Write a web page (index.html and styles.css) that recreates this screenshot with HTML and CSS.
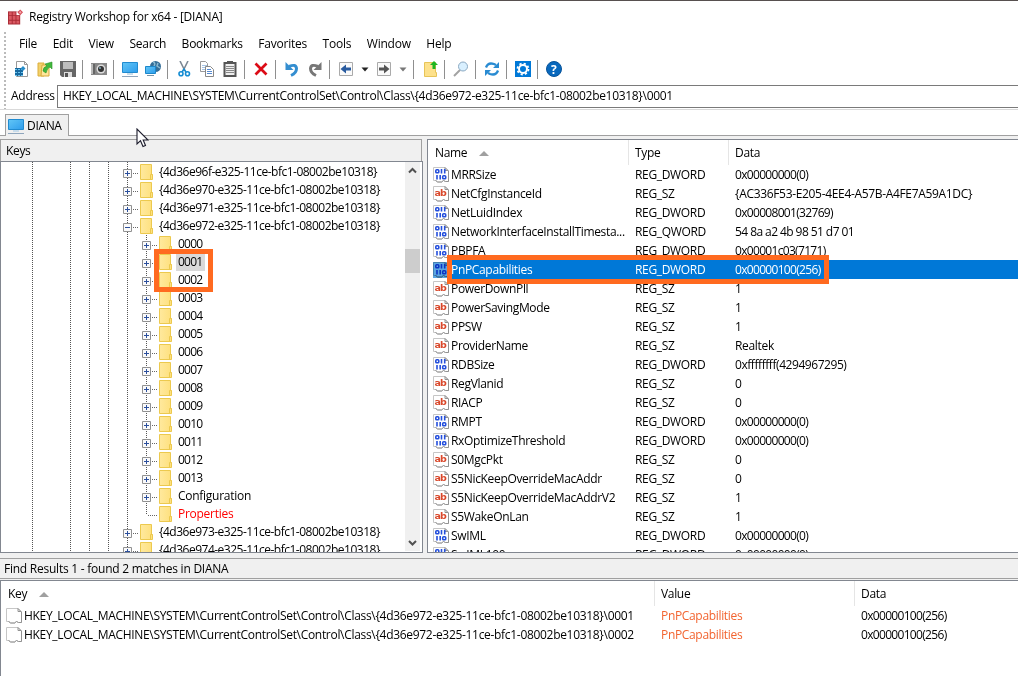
FILE: index.html
```html
<!DOCTYPE html>
<html lang="en">
<head>
<meta charset="utf-8">
<title>Registry Workshop for x64 - [DIANA]</title>
<link rel="stylesheet" href="styles.css">
</head>
<body>
<svg class="defs" aria-hidden="true">
  <defs>
    <linearGradient id="gold" x2="1"><stop stop-color="#ffe99e"/><stop offset="1" stop-color="#fee07d"/></linearGradient>
    <linearGradient id="sky" x2="1" y2="1"><stop stop-color="#62c6f6"/><stop offset="1" stop-color="#2d9cec"/></linearGradient>
    <symbol id="folder" viewBox="0 0 13 16"><path d="M.5.5h11v10h1v5H.5z" fill="url(#gold)" stroke="#ecc94e"/><path d="M10.500 15.500v-5h2" fill="none" stroke="#ecc94e"/></symbol>
    <symbol id="page" viewBox="0 0 16 16"><path d="M.5.500H12L15.500 4V14.500H12.500L10.500 13.500L9 15H4.500L3.500 13.500H.5z" fill="#fff" stroke="#c6c6c6"/><path d="M12 .500L15.500 4V14.500H12.500L10.500 13.500L9 14.500M12 .500V3.500H15M2.500 13.500L4.500 15H9" fill="none" stroke="#929292"/></symbol>
    <symbol id="bin" viewBox="0 0 16 16"><use href="#page" width="16" height="16"/><g fill="none" stroke="#244fdc" stroke-width="1.600"><rect x="2.800" y="2.800" width="3" height="3" rx=".9"/><path d="M8.500 2V6.600M11.700 2V6.600M4 8V12.600M7.200 8V12.600"/><rect x="9.700" y="8.800" width="3" height="3" rx=".9"/></g></symbol>
    <symbol id="str" viewBox="0 0 16 16"><use href="#page" width="16" height="16"/><text x="1.500" y="9.600" class="ab">ab</text></symbol>
    <symbol id="monitor" viewBox="0 0 16 16"><path d="M.5 1.500h15v10H.5z" fill="url(#sky)" stroke="#218bd0"/><path d="M5 12h6v2H5z" fill="#c8dceb"/><path d="M0 15.500h16" stroke="#8fa6bd"/></symbol>
    <symbol id="plus" viewBox="0 0 9 9"><path d="M.5.5h8v8h-8z" fill="#fafafa" stroke="#919191"/><path d="M2 4.500h5M4.500 2v5" stroke="#2b4f9c"/></symbol>
    <symbol id="minus" viewBox="0 0 9 9"><path d="M.5.5h8v8h-8z" fill="#fafafa" stroke="#919191"/><path d="M2 4.500h5" stroke="#2b4f9c"/></symbol>
  </defs>
</svg>
<div class="window">
  <header class="titlebar">
    <svg class="logo" viewBox="0 0 16 16"><path d="M0 2h13v14H0z" fill="#a92b35"/><path d="M1 3h3v3H1zM5 3h3v3H5zM1 7h3v4H1zM5 7h3v4H5zM9 7h3v4H9zM1 12h3v3H1zM5 12h3v3H5zM9 12h3v3H9z" fill="#da5962"/><path d="M9 2h4v4H9z" fill="#fff"/><path d="M13 0L16 3L13 6L10 3z" fill="#d64c56"/><path d="M13 1.500L14.500 3L13 4.500L11.500 3z" fill="#f4a7ab"/></svg>
    <span class="caption">Registry Workshop for x64 - [DIANA]</span>
  </header>
  <div class="bars">
    <div class="grip"></div>
    <div class="bar-rows">
      <nav class="menu"><span>File</span><span>Edit</span><span>View</span><span>Search</span><span>Bookmarks</span><span>Favorites</span><span>Tools</span><span>Window</span><span>Help</span></nav>
      <div class="toolbar">
        <svg viewBox="0 0 16 16"><path d="M2.500.5h8l3 3v12h-11z" fill="#fff" stroke="#999"/><path d="M10.500.500v3h3" fill="none" stroke="#999"/><path d="M1 7h8v8H1z" fill="#17699f"/><path d="M1 8.500h8M1 11.500h8M1 14.500h8" stroke="#6ec5ef" stroke-dasharray="2 1"/><path d="M9 5l2.500 2.500L9 10 6.500 7.500z" fill="#268dca"/></svg>
        <svg viewBox="0 0 16 16"><path d="M1 2h6v13H1z" fill="#f2d16b" stroke="#dcae3c"/><path d="M5 4h7v11H4z" fill="#ffe69b" stroke="#d9aa3d"/><path d="M6 10q0-4 4-5l-2-2 7-2v7l-2-2q-3 1-4 6z" fill="#42b83e" stroke="#289027" stroke-width=".6"/></svg>
        <svg viewBox="0 0 16 16"><path d="M0 0h16v16H2l-2-2z" fill="#666"/><path d="M3 1h10v7H3z" fill="#bdbdbd"/><path d="M4 11h8v5H4z" fill="#ddd"/><path d="M5 12h3v4H5z" fill="#555"/></svg>
        <i class="sep"></i>
        <svg viewBox="0 0 16 16"><path d="M0 2h16v12H0z" fill="#888"/><path d="M0 3h4v10H0z" fill="#bbb"/><path d="M2 3h2v10H2z" fill="#666"/><circle cx="10" cy="8" r="4.500" fill="#ddd"/><circle cx="10" cy="8" r="3" fill="#333"/><circle cx="9" cy="7" r="1" fill="#81a8bb"/></svg>
        <i class="sep"></i>
        <svg viewBox="0 0 16 16"><use href="#monitor" width="16" height="16"/></svg>
        <svg viewBox="0 0 16 16"><circle cx="10.500" cy="5.500" r="5.500" fill="#356e98"/><path d="M8 1q3 1 1 4M13 2l-1 3 3 2" stroke="#8bbad2" stroke-width="1.500" fill="none"/><path d="M.5 5.500h10v7H.5z" fill="url(#sky)" stroke="#1b87cb"/><path d="M2 14.500h7" stroke="#7793a5"/></svg>
        <i class="sep"></i>
        <svg viewBox="0 0 16 16"><path d="M4 0l5 10M12 0L7 10" stroke="#7d8995" stroke-width="1.600"/><circle cx="5" cy="12.800" r="2" fill="none" stroke="#168dd3" stroke-width="1.600"/><circle cx="11.500" cy="12.800" r="2" fill="none" stroke="#168dd3" stroke-width="1.600"/><path d="M6 11l2-3 2 3" fill="none" stroke="#168dd3" stroke-width="1.500"/></svg>
        <svg viewBox="0 0 16 16"><path d="M1.500.5h5l2 2v8h-7z" fill="#fff" stroke="#999"/><path d="M3 4.500h5M3 6.500h4M3 8.500h3" stroke="#a5c4e5"/><path d="M6.500 5.500h5l3 3v7h-8z" fill="#fff" stroke="#888"/><path d="M8 8.500h4M8 10.500h5M8 12.500h5" stroke="#5689cf"/></svg>
        <svg viewBox="0 0 16 16"><path d="M2.500 2h11v13h-11z" fill="#eee" stroke="#555" stroke-width="2"/><path d="M5 0h6v3H5z" fill="#555"/><path d="M4 5.500h8M4 7.500h8M4 9.500h8M4 11.500h8" stroke="#888"/></svg>
        <i class="sep"></i>
        <svg viewBox="0 0 16 16"><path d="M2.500 2.500l11 11M13.500 2.500l-11 11" stroke="#dc0b16" stroke-width="2.700"/></svg>
        <i class="sep"></i>
        <svg viewBox="0 0 16 16"><path d="M5 5.500q7-3 7.500 2Q12.500 12 7 14.500" fill="none" stroke="#348ed0" stroke-width="3"/><path d="M1.500 1v8h8z" fill="#348ed0"/></svg>
        <svg viewBox="0 0 16 16"><path d="M11 5.500q-7-3-7.500 2Q3.500 12 9 14.500" fill="none" stroke="#777" stroke-width="3"/><path d="M14.500 1v8h-8z" fill="#777"/></svg>
        <i class="sep"></i>
        <svg viewBox="0 0 16 16"><path d="M1.500 1.500h13v13h-13z" fill="#fafafa" stroke="#aaa"/><path d="M2.500 8L8 3.500v3h5v3H8v3z" fill="#295b9f"/></svg>
        <svg class="drop" viewBox="0 0 8 16"><path d="M.5 6.500h7L4 10.500z" fill="#222"/></svg>
        <svg viewBox="0 0 16 16"><path d="M1.500 1.500h13v13h-13z" fill="#fafafa" stroke="#aaa"/><path d="M13.500 8L8 3.500v3H3v3h5v3z" fill="#555"/></svg>
        <svg class="drop" viewBox="0 0 8 16"><path d="M.5 6.500h7L4 10.500z" fill="#777"/></svg>
        <i class="sep"></i>
        <svg viewBox="0 0 16 16"><path d="M2.500 1.500h11v10h1v4h-12z" fill="#fde18b" stroke="#e7c458"/><path d="M12 0l4 4h-2.500v4h-3V4H8z" fill="#1eb622"/></svg>
        <i class="sep"></i>
        <svg viewBox="0 0 16 16"><path d="M1 15l6-6" stroke="#a2a2a2" stroke-width="2"/><circle cx="10" cy="5.500" r="4.500" fill="#d9f0ff" stroke="#8ba9c2"/></svg>
        <i class="sep"></i>
        <svg viewBox="0 0 16 16"><path d="M2 6.500Q4 1 10 3l2 1M14 9.500Q12 15 6 13l-2-1" stroke="#298bd2" stroke-width="2.300" fill="none"/><path d="M15 1v6H9zM1 15V9h6z" fill="#298bd2"/></svg>
        <i class="sep"></i>
        <svg viewBox="0 0 16 16"><path d="M0 0h16v16H0z" fill="#0078d7"/><circle cx="8" cy="8" r="4" fill="none" stroke="#fff" stroke-width="2"/><circle cx="8" cy="8" r="5.500" fill="none" stroke="#fff" stroke-width="1.800" stroke-dasharray="2.160 2.160"/></svg>
        <i class="sep"></i>
        <svg viewBox="0 0 16 16"><circle cx="8" cy="8" r="7.500" fill="#0868bd" stroke="#085399"/><text x="5" y="12.500" class="help">?</text></svg>
      </div>
      <div class="address"><label>Address</label><div class="field path">HKEY_LOCAL_MACHINE\SYSTEM\CurrentControlSet\Control\Class\{4d36e972-e325-11ce-bfc1-08002be10318}\0001</div></div>
    </div>
  </div>
  <div class="tabs"><div class="tab"><svg viewBox="0 0 16 16"><use href="#monitor" width="16" height="16"/></svg><span>DIANA</span></div></div>
  <main class="panes">
    <section class="keys">
      <h2>Keys</h2>
      <div class="tree-box">
        <div class="tree">
          <div class="node"><svg class="box"><use href="#plus"/></svg><i></i><svg class="dir"><use href="#folder"/></svg><span>{4d36e96f-e325-11ce-bfc1-08002be10318}</span></div>
          <div class="node"><svg class="box"><use href="#plus"/></svg><i></i><svg class="dir"><use href="#folder"/></svg><span>{4d36e970-e325-11ce-bfc1-08002be10318}</span></div>
          <div class="node"><svg class="box"><use href="#plus"/></svg><i></i><svg class="dir"><use href="#folder"/></svg><span>{4d36e971-e325-11ce-bfc1-08002be10318}</span></div>
          <div class="node"><svg class="box"><use href="#minus"/></svg><i></i><svg class="dir"><use href="#folder"/></svg><span>{4d36e972-e325-11ce-bfc1-08002be10318}</span></div>
          <div class="node child"><svg class="box"><use href="#plus"/></svg><i></i><svg class="dir"><use href="#folder"/></svg><span>0000</span></div>
          <div class="node child"><svg class="box"><use href="#plus"/></svg><i></i><svg class="dir"><use href="#folder"/></svg><span class="picked">0001</span></div>
          <div class="node child"><svg class="box"><use href="#plus"/></svg><i></i><svg class="dir"><use href="#folder"/></svg><span>0002</span></div>
          <div class="node child"><svg class="box"><use href="#plus"/></svg><i></i><svg class="dir"><use href="#folder"/></svg><span>0003</span></div>
          <div class="node child"><svg class="box"><use href="#plus"/></svg><i></i><svg class="dir"><use href="#folder"/></svg><span>0004</span></div>
          <div class="node child"><svg class="box"><use href="#plus"/></svg><i></i><svg class="dir"><use href="#folder"/></svg><span>0005</span></div>
          <div class="node child"><svg class="box"><use href="#plus"/></svg><i></i><svg class="dir"><use href="#folder"/></svg><span>0006</span></div>
          <div class="node child"><svg class="box"><use href="#plus"/></svg><i></i><svg class="dir"><use href="#folder"/></svg><span>0007</span></div>
          <div class="node child"><svg class="box"><use href="#plus"/></svg><i></i><svg class="dir"><use href="#folder"/></svg><span>0008</span></div>
          <div class="node child"><svg class="box"><use href="#plus"/></svg><i></i><svg class="dir"><use href="#folder"/></svg><span>0009</span></div>
          <div class="node child"><svg class="box"><use href="#plus"/></svg><i></i><svg class="dir"><use href="#folder"/></svg><span>0010</span></div>
          <div class="node child"><svg class="box"><use href="#plus"/></svg><i></i><svg class="dir"><use href="#folder"/></svg><span>0011</span></div>
          <div class="node child"><svg class="box"><use href="#plus"/></svg><i></i><svg class="dir"><use href="#folder"/></svg><span>0012</span></div>
          <div class="node child"><svg class="box"><use href="#plus"/></svg><i></i><svg class="dir"><use href="#folder"/></svg><span>0013</span></div>
          <div class="node child"><svg class="box"><use href="#plus"/></svg><i></i><svg class="dir"><use href="#folder"/></svg><span class="word">Configuration</span></div>
          <div class="node child last"><i></i><svg class="dir"><use href="#folder"/></svg><span class="word red">Properties</span></div>
          <div class="node"><svg class="box"><use href="#plus"/></svg><i></i><svg class="dir"><use href="#folder"/></svg><span>{4d36e973-e325-11ce-bfc1-08002be10318}</span></div>
          <div class="node"><svg class="box"><use href="#plus"/></svg><i></i><svg class="dir"><use href="#folder"/></svg><span>{4d36e974-e325-11ce-bfc1-08002be10318}</span></div>
        </div>
        <div class="scroll">
          <svg viewBox="0 0 15 16"><path d="M4 10.500L7.500 7L11 10.500" fill="none" stroke="#505050" stroke-width="2"/></svg>
          <div class="thumb"></div>
          <svg class="down" viewBox="0 0 15 16"><path d="M4 6L7.500 9.500L11 6" fill="none" stroke="#505050" stroke-width="2"/></svg>
        </div>
      </div>
    </section>
    <section class="values">
      <div class="vrow head"><b>Name<svg viewBox="0 0 10 5"><path d="M0 5L5 0l5 5z" fill="#a0a0a0"/></svg></b><b>Type</b><b>Data</b></div>
      <div class="vrow"><svg><use href="#bin"/></svg><span>MRRSize</span><span>REG_DWORD</span><span class="hex">0x00000000(0)</span></div>
      <div class="vrow"><svg><use href="#str"/></svg><span>NetCfgInstanceId</span><span>REG_SZ</span><span>{AC336F53-E205-4EE4-A57B-A4FE7A59A1DC}</span></div>
      <div class="vrow"><svg><use href="#bin"/></svg><span>NetLuidIndex</span><span>REG_DWORD</span><span class="hex">0x00008001(32769)</span></div>
      <div class="vrow"><svg><use href="#bin"/></svg><span>NetworkInterfaceInstallTimesta...</span><span>REG_QWORD</span><span class="bytes">54 8a a2 4b 98 51 d7 01</span></div>
      <div class="vrow"><svg><use href="#bin"/></svg><span>PBPFA</span><span>REG_DWORD</span><span class="hex">0x00001c03(7171)</span></div>
      <div class="vrow selected"><svg><use href="#bin"/></svg><span>PnPCapabilities</span><span>REG_DWORD</span><span class="hex">0x00000100(256)</span></div>
      <div class="vrow"><svg><use href="#str"/></svg><span>PowerDownPll</span><span>REG_SZ</span><span>1</span></div>
      <div class="vrow"><svg><use href="#str"/></svg><span>PowerSavingMode</span><span>REG_SZ</span><span>1</span></div>
      <div class="vrow"><svg><use href="#str"/></svg><span>PPSW</span><span>REG_SZ</span><span>1</span></div>
      <div class="vrow"><svg><use href="#str"/></svg><span>ProviderName</span><span>REG_SZ</span><span>Realtek</span></div>
      <div class="vrow"><svg><use href="#bin"/></svg><span>RDBSize</span><span>REG_DWORD</span><span class="long">0xffffffff(4294967295)</span></div>
      <div class="vrow"><svg><use href="#str"/></svg><span>RegVlanid</span><span>REG_SZ</span><span>0</span></div>
      <div class="vrow"><svg><use href="#str"/></svg><span>RIACP</span><span>REG_SZ</span><span>0</span></div>
      <div class="vrow"><svg><use href="#bin"/></svg><span>RMPT</span><span>REG_DWORD</span><span class="hex">0x00000000(0)</span></div>
      <div class="vrow"><svg><use href="#bin"/></svg><span>RxOptimizeThreshold</span><span>REG_DWORD</span><span class="hex">0x00000000(0)</span></div>
      <div class="vrow"><svg><use href="#str"/></svg><span>S0MgcPkt</span><span>REG_SZ</span><span>0</span></div>
      <div class="vrow"><svg><use href="#str"/></svg><span>S5NicKeepOverrideMacAddr</span><span>REG_SZ</span><span>0</span></div>
      <div class="vrow"><svg><use href="#str"/></svg><span>S5NicKeepOverrideMacAddrV2</span><span>REG_SZ</span><span>1</span></div>
      <div class="vrow"><svg><use href="#str"/></svg><span>S5WakeOnLan</span><span>REG_SZ</span><span>1</span></div>
      <div class="vrow"><svg><use href="#bin"/></svg><span>SwIML</span><span>REG_DWORD</span><span class="hex">0x00000000(0)</span></div>
      <div class="vrow"><svg><use href="#bin"/></svg><span>SwIML100</span><span>REG_DWORD</span><span class="hex">0x00000000(0)</span></div>
    </section>
  </main>
  <section class="results">
    <h2>Find Results 1 - found 2 matches in DIANA</h2>
    <div class="list">
      <div class="rrow head"><b>Key<svg viewBox="0 0 10 5"><path d="M0 5L5 0l5 5z" fill="#a0a0a0"/></svg></b><b>Value</b><b>Data</b></div>
      <div class="rrow"><svg><use href="#page"/></svg><span class="path">HKEY_LOCAL_MACHINE\SYSTEM\CurrentControlSet\Control\Class\{4d36e972-e325-11ce-bfc1-08002be10318}\0001</span><span class="hit">PnPCapabilities</span><span class="hex">0x00000100(256)</span></div>
      <div class="rrow"><svg><use href="#page"/></svg><span class="path">HKEY_LOCAL_MACHINE\SYSTEM\CurrentControlSet\Control\Class\{4d36e972-e325-11ce-bfc1-08002be10318}\0002</span><span class="hit">PnPCapabilities</span><span class="hex">0x00000100(256)</span></div>
    </div>
  </section>
  <div class="mark mark-keys"></div>
  <div class="mark mark-value"></div>
  <svg class="cursor" viewBox="0 0 13 20"><path d="M1 1v15l3.500-3.300L7 18.500l2.500-1L7.200 12H12z" fill="#fff" stroke="#1c1c2c" stroke-width="1.100"/></svg>
</div>
</body>
</html>
```

FILE: styles.css
```css
* { box-sizing: border-box; }
body { margin: 0; font: 12px/18px "Open Sans", "Noto Sans", sans-serif; letter-spacing: -0.33px; color: #000; overflow: hidden; }
svg { display: block; flex: none; }
.defs { position: absolute; width: 0; height: 0; }
.ab { font: bold 9.5px/1 "DejaVu Sans", sans-serif; letter-spacing: -0.8px; fill: #d9482b; }
.help { font: bold 12px/1 "Open Sans", sans-serif; fill: #fff; }
.window { position: relative; width: 1018px; height: 676px; display: flex; flex-direction: column; background: #f0f0f0; overflow: hidden; white-space: nowrap; }
.titlebar { height: 32px; border-top: 1px solid #57504f; background: #fff; display: flex; align-items: center; gap: 6px; padding-left: 8px; }
.logo { width: 15px; height: 16px; }
.caption { letter-spacing: -0.23px; }
.bars { height: 78px; display: flex; background: #fff; border-bottom: 1px solid #d9d9d9; }
.grip { width: 2px; margin-left: 4px; background: repeating-linear-gradient(#bbb 0 2px, #fff 2px 4px); }
.bar-rows { flex: 1; display: flex; flex-direction: column; }
.menu { height: 24px; display: flex; align-items: center; gap: 15.5px; padding-left: 13px; letter-spacing: -0.22px; }
.toolbar { height: 28px; display: flex; align-items: center; padding: 0 0 2px 8px; }
.toolbar svg { width: 16px; height: 16px; }
.toolbar svg + svg { margin-left: 7px; }
.toolbar .drop { width: 8px; }
.sep { width: 1px; height: 19px; margin: 0 8px 0 6px; background: #8f8f8f; }
.address { height: 25px; display: flex; align-items: center; padding: 0 0 1px 5px; }
.address label { width: 46px; letter-spacing: -0.25px; }
.field { flex: 1; height: 23px; margin-right: -1px; border: 1px solid #7a7a7a; padding: 0 5px; line-height: 19px; }
.path { letter-spacing: -0.31px; }
.tabs { height: 26px; background: #fff; border-bottom: 1px solid #a0a0a0; display: flex; align-items: flex-end; padding-left: 5px; }
.tab { width: 64px; height: 22px; margin-bottom: -1px; border: 1px solid #a0a0a0; border-bottom: 0; background: #f0f0f0; display: flex; align-items: center; gap: 3px; padding-left: 2px; }
.tab svg { width: 16px; height: 16px; }
.panes { height: 417px; display: flex; gap: 4px; padding-top: 3px; }
.keys { width: 423px; display: flex; flex-direction: column; }
h2 { margin: 0; font-size: 12px; font-weight: 400; line-height: 21px; }
.keys h2 { width: 422px; height: 22px; border: 1px solid #a0a0a0; border-bottom: 0; padding-left: 5px; }
.tree-box { flex: 1; min-height: 0; display: flex; border: 1px solid #828790; background: #fff; }
.tree { width: 404px; overflow: hidden; padding-top: 1px; background: repeating-linear-gradient(#fff0 0 1px, #fff 1px 2px), linear-gradient(90deg, #fff 31px, #555 31px 32px, #fff 32px 69px, #555 69px 70px, #fff 70px 88px, #555 88px 89px, #fff 89px 107px, #555 107px 108px, #fff 108px 126px, #555 126px 127px, #fff 127px); }
.node { height: 18px; display: flex; align-items: center; padding-left: 122px; }
.node.child { padding-left: 141px; background: repeating-linear-gradient(#555 0 1px, #fff 1px 2px) 145px 0 / 1px 18px no-repeat; }
.node.last { background-size: 1px 10px; padding-left: 147px; }
.box { width: 9px; height: 9px; margin-top: 3px; }
.node i { width: 5px; height: 1px; margin: 2px 2px 0 1px; background: repeating-linear-gradient(90deg, #666 0 1px, #fff 1px 2px); }
.node.last i { width: 9px; margin-left: 0; }
.dir { width: 13px; height: 16px; }
.node span { margin-left: 4px; padding: 0 2px; letter-spacing: -0.5px; }
.node.child span { letter-spacing: -0.75px; padding-right: 3px; }
.node.child .word { letter-spacing: -0.27px; }
.picked { background: #d9d9d9; }
.red { color: #f00; }
.hex { letter-spacing: -0.68px; }
.bytes { letter-spacing: -0.57px; }
.long { letter-spacing: -0.44px; }
.scroll { width: 15px; background: #f0f0f0; margin-bottom: 1px; display: flex; flex-direction: column; }
.scroll svg { width: 15px; height: 16px; }
.thumb { height: 24px; margin-top: 71px; background: #cdcdcd; }
.scroll .down { margin-top: auto; }
.values { flex: 1; border: 1px solid #828790; border-right: 0; background: #fff; overflow: hidden; }
.vrow { height: 19px; display: grid; grid-template-columns: 18px 184px 100px 1fr; align-items: center; padding-left: 5px; }
.vrow svg, .rrow svg { width: 16px; height: 16px; }
.vrow.head { height: 25px; grid-template-columns: 201px 100px 1fr; padding-left: 0; }
.head b { font-weight: 400; height: 100%; display: flex; align-items: center; gap: 12px; padding: 1px 0 0 6px; border-right: 1px solid #e5e5e5; }
.head b:last-child { border: 0; }
.head b:first-child { padding-left: 7px; }
.head .rhead, .head b svg { width: 10px; height: 5px; }
.selected { color: #fff; background: linear-gradient(#0078d7, #0078d7) 21px 0 no-repeat; }
.selected svg { position: relative; background: #5aa5e2; opacity: 1; }
.selected svg use { mix-blend-mode: multiply; }
.results { flex: 1; margin-top: 5px; display: flex; flex-direction: column; }
.results h2 { height: 21px; margin-bottom: 1px; border-top: 1px solid #a0a0a0; border-bottom: 1px solid #a0a0a0; padding-left: 4px; line-height: 20px; letter-spacing: -0.24px; }
.list { flex: 1; border: 1px solid #828790; border-width: 1px 0 0 1px; background: #fff; }
.rrow { height: 19px; display: grid; grid-template-columns: 18px 637px 200px 1fr; align-items: center; padding-left: 5px; }
.rrow.head { height: 25px; grid-template-columns: 654px 200px 1fr; padding-left: 0; }
.hit { color: #f26430; }
.mark { position: absolute; border: 5px solid #ff6a20; }
.mark-keys { left: 154px; top: 249px; width: 59px; height: 43px; }
.mark-value { left: 447px; top: 255px; width: 382px; height: 29px; }
.cursor { position: absolute; left: 136px; top: 128px; width: 13px; height: 20px; }
```
